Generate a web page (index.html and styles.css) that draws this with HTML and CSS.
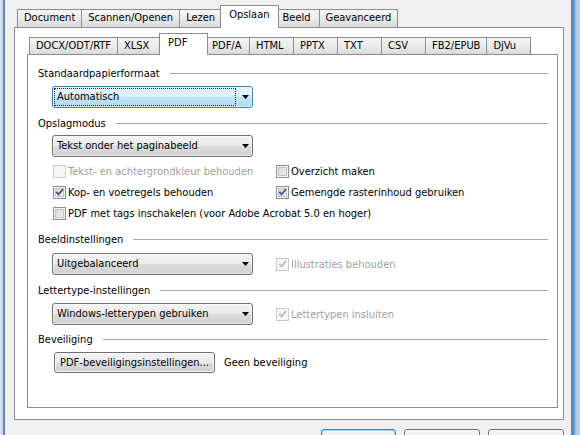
FILE: index.html
```html
<!DOCTYPE html>
<html lang="nl">
<head>
<meta charset="utf-8">
<title>Opslaan - PDF</title>
<link rel="stylesheet" href="styles.css">
</head>
<body>
<div class="window">
  <div class="frame-left"></div>
  <div class="content">
    <div class="tabs outer-tabs">
      <div class="tab">Document</div>
      <div class="tab">Scannen/Openen</div>
      <div class="tab">Lezen</div>
      <div class="tab active">Opslaan</div>
      <div class="tab">Beeld</div>
      <div class="tab">Geavanceerd</div>
    </div>
    <div class="panel outer-panel">
      <div class="tabs inner-tabs">
        <div class="tab">DOCX/ODT/RTF</div>
        <div class="tab">XLSX</div>
        <div class="tab active">PDF</div>
        <div class="tab">PDF/A</div>
        <div class="tab">HTML</div>
        <div class="tab">PPTX</div>
        <div class="tab">TXT</div>
        <div class="tab">CSV</div>
        <div class="tab">FB2/EPUB</div>
        <div class="tab">DjVu</div>
      </div>
      <div class="panel inner-panel">
        <div class="head">Standaardpapierformaat</div>
        <div class="combo focused mt5">
          <span class="val">Automatisch</span>
          <svg class="arrow" viewBox="0 0 7 4" width="7" height="4"><polygon points="0,0 7,0 3.5,4" fill="#000"/></svg>
        </div>

        <div class="head mt8">Opslagmodus</div>
        <div class="combo mt4">
          <span class="val">Tekst onder het paginabeeld</span>
          <svg class="arrow" viewBox="0 0 7 4" width="7" height="4"><polygon points="0,0 7,0 3.5,4" fill="#000"/></svg>
        </div>

        <div class="checks mt4">
          <label class="check disabled"><span class="box"></span>Tekst- en achtergrondkleur behouden</label>
          <label class="check"><span class="box"></span>Overzicht maken</label>
          <label class="check"><span class="box"><svg viewBox="0 0 11 11" width="11" height="11"><path d="M1.6 5.4 L3.1 4.2 L4.5 6 L8.3 1.6 L9.6 2.7 L4.6 8.7 Z" fill="#3f5a8c"/></svg></span>Kop- en voetregels behouden</label>
          <label class="check"><span class="box"><svg viewBox="0 0 11 11" width="11" height="11"><path d="M1.6 5.4 L3.1 4.2 L4.5 6 L8.3 1.6 L9.6 2.7 L4.6 8.7 Z" fill="#3f5a8c"/></svg></span>Gemengde rasterinhoud gebruiken</label>
          <label class="check wide"><span class="box"></span>PDF met tags inschakelen (voor Adobe Acrobat 5.0 en hoger)</label>
        </div>

        <div class="head mt8">Beeldinstellingen</div>
        <div class="combo-row mt6">
          <div class="combo">
            <span class="val">Uitgebalanceerd</span>
            <svg class="arrow" viewBox="0 0 7 4" width="7" height="4"><polygon points="0,0 7,0 3.5,4" fill="#000"/></svg>
          </div>
          <label class="check disabled"><span class="box"><svg viewBox="0 0 11 11" width="11" height="11"><path d="M1.6 5.4 L3.1 4.2 L4.5 6 L8.3 1.6 L9.6 2.7 L4.6 8.7 Z" fill="#bcbcbc"/></svg></span>Illustraties behouden</label>
        </div>

        <div class="head mt8">Lettertype-instellingen</div>
        <div class="combo-row mt5">
          <div class="combo">
            <span class="val">Windows-letterypen gebruiken</span>
            <svg class="arrow" viewBox="0 0 7 4" width="7" height="4"><polygon points="0,0 7,0 3.5,4" fill="#000"/></svg>
          </div>
          <label class="check disabled"><span class="box"><svg viewBox="0 0 11 11" width="11" height="11"><path d="M1.6 5.4 L3.1 4.2 L4.5 6 L8.3 1.6 L9.6 2.7 L4.6 8.7 Z" fill="#bcbcbc"/></svg></span>Lettertypen insluiten</label>
        </div>

        <div class="head mt7">Beveiliging</div>
        <div class="sec-row mt5">
          <button class="btn sec-btn">PDF-beveiligingsinstellingen...</button>
          <span>Geen beveiliging</span>
        </div>
      </div>
    </div>
    <div class="buttons">
      <button class="btn dlg default" aria-label="OK"></button>
      <button class="btn dlg" aria-label="Annuleren"></button>
      <button class="btn dlg" aria-label="Toepassen"></button>
    </div>
  </div>
  <div class="frame-right"></div>
</div>
</body>
</html>
```

FILE: styles.css
```css
* { box-sizing: border-box; }
html, body { margin: 0; padding: 0; }
body {
  width: 580px;
  height: 435px;
  overflow: hidden;
  background: #f0f0f0;
  font: 11px "DejaVu Sans Condensed", "Liberation Sans", sans-serif;
  color: #000;
}
.window { display: flex; height: 435px; }
.frame-left {
  flex: none;
  width: 6px;
  background: linear-gradient(to right, #d6e4f2 0, #c3d7ec 3px, #6f8cab 3px, #5d7a99 5px, #e8edf3 5px);
}
.frame-right {
  flex: none;
  width: 9px;
  background: linear-gradient(to right, #6b7d90 0, #6b7d90 1px, #4d8ac6 1px, #5e98cf 3px, #a6c8ea 5px, #bcd6ef 9px);
}
.content { flex: 1; min-width: 0; padding: 5px 0 0 8px; }

/* tabs */
.tabs { display: flex; align-items: flex-end; }
.tab {
  border: 1px solid #898c95;
  border-bottom: none;
  margin-right: -1px;
  padding: 0 6px;
  white-space: nowrap;
  background: linear-gradient(#f6f6f6, #e9e9e9 55%, #dadada);
}
.tab.active {
  position: relative;
  z-index: 1;
  background: #fff;
  margin-left: -2px;
  margin-right: -3px;
  padding: 1px 8px 0;
}
.outer-tabs { width: 550px; height: 22px; padding-left: 3px; }
.outer-tabs .tab { height: 18px; line-height: 16px; min-width: 44px; padding: 0 6px; }
.outer-tabs .tab.active { height: 23px; margin-bottom: -1px; padding: 1px 8px 0; min-width: 48px; }
.inner-tabs { height: 21px; padding-left: 2px; }
.inner-tabs .tab { height: 17px; line-height: 15px; min-width: 45px; }
.inner-tabs .tab.active { height: 22px; margin-bottom: -1px; min-width: 49px; }

.panel { border: 1px solid #898c95; background: #fff; }
.outer-panel { width: 550px; height: 393px; padding: 5px 5px 11px 12px; }
.inner-panel { height: 354px; padding: 11px 9px 0 10px; }

/* section headers */
.head { display: flex; align-items: center; gap: 10px; height: 15px; white-space: nowrap; }
.head::after { content: ""; flex: 1; height: 1px; background: #a8a8a8; }

.mt4 { margin-top: 4px; }
.mt5 { margin-top: 5px; }
.mt6 { margin-top: 6px; }
.mt7 { margin-top: 7px; }
.mt8 { margin-top: 8px; }

/* combobox */
.combo {
  display: flex;
  align-items: center;
  width: 201px;
  height: 22px;
  margin-left: 14px;
  padding: 0 3px 0 2px;
  border: 1px solid #707070;
  border-radius: 3px;
  background: linear-gradient(#f3f3f3, #ebebeb 50%, #dddddd 50%, #d0d0d0);
  box-shadow: inset 0 0 0 1px rgba(255,255,255,0.55);
  white-space: nowrap;
}
.combo.focused {
  border-color: #3c7fb1;
  background: linear-gradient(#eaf6fd, #dbf0fc 50%, #c3e5f8 50%, #aed9f3);
}
.val {
  flex: 1;
  height: 16px;
  line-height: 16px;
  padding-left: 2px;
  margin-right: 7px;
}
.focused .val { outline: 1px dotted #222; outline-offset: 0; }
.arrow { flex: none; display: block; }

/* checkboxes */
.checks {
  display: grid;
  grid-template-columns: 223px auto;
  grid-auto-rows: 21px;
  margin-left: 15px;
}
.check { display: flex; align-items: center; gap: 2px; white-space: nowrap; }
.check.wide { grid-column: 1 / 3; }
.box {
  flex: none;
  width: 13px;
  height: 13px;
  border: 1px solid #8f8f8f;
  background: linear-gradient(135deg, #cfd3d9, #f8f8f8);
  box-shadow: inset 0 0 0 1px #f5f5f5, inset 0 0 0 2px #bfc3c9;
  display: flex;
  align-items: center;
  justify-content: center;
}
.box svg { display: block; }
.check.disabled { color: #a0a0a0; }
.check.disabled .box {
  border-color: #c9c9c9;
  background: #f6f6f6;
  box-shadow: none;
}

.combo-row {
  display: grid;
  grid-template-columns: 224px auto;
  align-items: center;
  margin-left: 14px;
}
.combo-row .combo { margin-left: 0; }

/* buttons */
.btn {
  font: inherit;
  color: #000;
  border: 1px solid #707070;
  border-radius: 3px;
  background: linear-gradient(#f3f3f3, #ebebeb 50%, #dddddd 50%, #cfcfcf);
  box-shadow: inset 0 0 0 1px #fbfbfb;
  padding: 0;
  white-space: nowrap;
}
.sec-row { display: flex; align-items: center; gap: 9px; margin-left: 16px; }
.sec-btn { width: 161px; height: 21px; }

.buttons {
  display: flex;
  justify-content: flex-end;
  gap: 8px;
  width: 550px;
  margin-top: 9px;
}
.dlg { width: 76px; height: 23px; }
.dlg.default { width: 75px; border-color: #3c7fb1; box-shadow: inset 0 0 0 1px #a3dcf7; }
```
